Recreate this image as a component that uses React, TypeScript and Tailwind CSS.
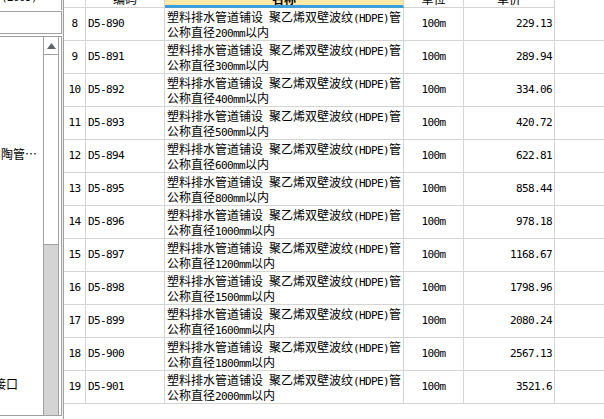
import React from "react";

const rows: [number, string, string, string][] = [
  [8, "D5-890", "200", "229.13"],
  [9, "D5-891", "300", "289.94"],
  [10, "D5-892", "400", "334.06"],
  [11, "D5-893", "500", "420.72"],
  [12, "D5-894", "600", "622.81"],
  [13, "D5-895", "800", "858.44"],
  [14, "D5-896", "1000", "978.18"],
  [15, "D5-897", "1200", "1168.67"],
  [16, "D5-898", "1500", "1798.96"],
  [17, "D5-899", "1600", "2080.24"],
  [18, "D5-900", "1800", "2567.13"],
  [19, "D5-901", "2000", "3521.6"],
];

// half-width latin runs in a narrow mono face, CJK in Noto
const Mixed = ({ s }: { s: string }) => {
  const parts = s.split(/([\x20-\x7e]+)/).filter(Boolean);
  return (
    <>
      {parts.map((p, i) =>
        /^[\x20-\x7e]+$/.test(p) ? (
          <span
            key={i}
            className="font-['DejaVu_Sans_Mono',monospace] text-[11px] tracking-[-0.62px] whitespace-pre"
          >
            {p}
          </span>
        ) : (
          <span key={i}>{p}</span>
        )
      )}
    </>
  );
};

const Row = ({ row }: { row: [number, string, string, string] }) => {
  const [no, code, dia, price] = row;
  return (
    <div className="flex h-[33px] border-b border-[#d4d4d4]">
      <div className="w-[22px] border-r border-[#d4d4d4] flex items-center justify-center">
        <Mixed s={String(no)} />
      </div>
      <div className="w-[79px] border-r border-[#d4d4d4] flex items-center pl-[2px]">
        <Mixed s={code} />
      </div>
      <div className="w-[239px] border-r border-[#d4d4d4] pl-[2px] pt-[2px] leading-[13px] whitespace-nowrap">
        <div>
          <Mixed s="塑料排水管道铺设 聚乙烯双壁波纹(HDPE)管" />
        </div>
        <div>
          <Mixed s={`公称直径${dia}mm以内`} />
        </div>
      </div>
      <div className="w-[60px] border-r border-[#d4d4d4] flex items-center justify-center">
        <Mixed s="100m" />
      </div>
      <div className="w-[91px] border-r border-[#d4d4d4] flex items-center justify-end pr-[2px]">
        <Mixed s={price} />
      </div>
    </div>
  );
};

const HeadCell = ({ w, label, active }: { w: string; label: string; active?: boolean }) => (
  <div
    className={`${w} border-r border-[#d4d4d4] overflow-hidden ${
      active ? "bg-[#fee9a8] border-b-[3px] border-b-[#3c9edb]" : "border-b border-b-[#d4d4d4]"
    }`}
  >
    <div className={`h-[20px] -mt-[11px] flex items-center justify-center ${active ? "font-bold" : ""}`}>
      {label}
    </div>
  </div>
);

export default function App() {
  return (
    <div className="w-[604px] h-[419px] overflow-hidden bg-white flex text-[12px] text-black font-['Noto_Sans_CJK_SC',sans-serif]">
      <aside className="w-[62px] flex flex-col">
        <div className="h-[10px] border-r border-[#a0a0a0] overflow-hidden">
          <div className="h-[14px] -mt-[9px] pl-[1px] flex items-center">
            <Mixed s="(2009)" />
          </div>
        </div>
        <div className="h-[23px] mt-[1px] border-y border-r border-[#a0a0a0] bg-white" />
        <div className="flex-1 mt-[2px] mb-[3px] border-y border-r border-[#a0a0a0] flex">
          <div className="w-[43px] overflow-hidden whitespace-nowrap relative">
            <div className="absolute top-[110px] left-[1px] leading-[14px]">陶管…</div>
            <div className="absolute top-[340px] -left-[6px] leading-[14px]">接口</div>
          </div>
          <div className="w-[16px] flex flex-col border-l border-r border-[#a0a0a0]">
            <div className="h-[18px] border-b border-[#a0a0a0] flex items-center justify-center">
              <svg width="9" height="6" viewBox="0 0 9 6">
                <path d="M4.5 0 L9 6 L0 6 Z" fill="#5f6368" />
              </svg>
            </div>
            <div className="h-[190px] bg-white border-b border-[#a0a0a0]" />
            <div className="flex-1 bg-[#d4d4d4]" />
          </div>
        </div>
      </aside>
      <div className="w-[2px] flex flex-col">
        <div className="flex-1 bg-[#f0f0f0] border-r border-[#a0a0a0]" />
      </div>
      <main className="flex-1 flex flex-col">
        <div className="flex h-[8px]">
          <HeadCell w="w-[22px]" label="" />
          <HeadCell w="w-[79px]" label="编码" />
          <HeadCell w="w-[239px]" label="名称" active />
          <HeadCell w="w-[60px]" label="单位" />
          <HeadCell w="w-[91px]" label="单价" />
        </div>
        {rows.map((r) => (
          <Row key={r[0]} row={r} />
        ))}
      </main>
    </div>
  );
}
